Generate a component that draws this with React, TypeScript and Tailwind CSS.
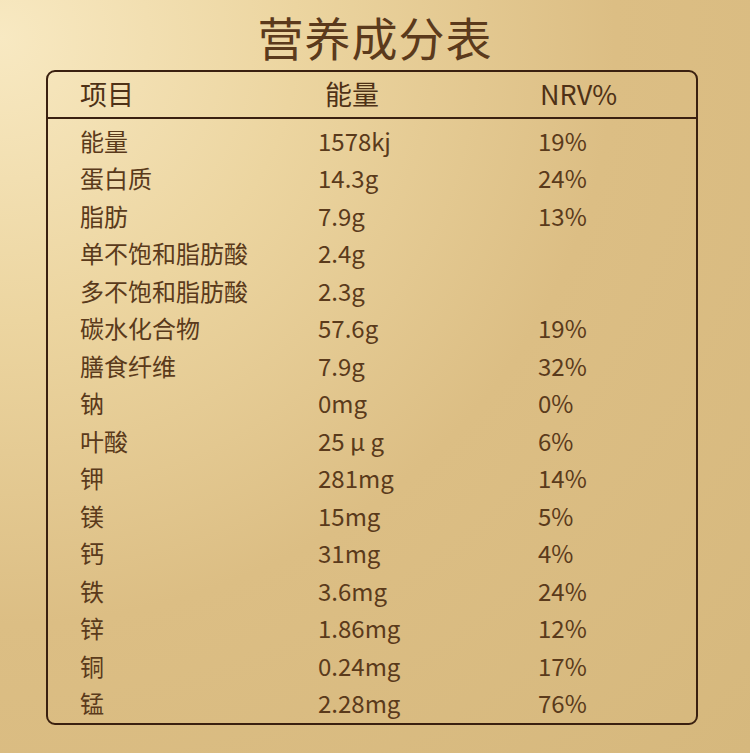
const rows: [string, string, string][] = [
  ['能量', '1578kj', '19%'],
  ['蛋白质', '14.3g', '24%'],
  ['脂肪', '7.9g', '13%'],
  ['单不饱和脂肪酸', '2.4g', ''],
  ['多不饱和脂肪酸', '2.3g', ''],
  ['碳水化合物', '57.6g', '19%'],
  ['膳食纤维', '7.9g', '32%'],
  ['钠', '0mg', '0%'],
  ['叶酸', '25 μ g', '6%'],
  ['钾', '281mg', '14%'],
  ['镁', '15mg', '5%'],
  ['钙', '31mg', '4%'],
  ['铁', '3.6mg', '24%'],
  ['锌', '1.86mg', '12%'],
  ['铜', '0.24mg', '17%'],
  ['锰', '2.28mg', '76%'],
];

export default function App() {
  return (
    <div
      className="w-[750px] h-[753px] overflow-hidden bg-[radial-gradient(ellipse_at_0%_5%,#f8e9c2_0%,#ecd5a0_28%,#dcbe84_58%,#d6b87d_100%)] text-[#5a3a1b]"
      style={{ fontFamily: '"Noto Sans CJK SC", "Noto Sans", sans-serif' }}
    >
      <h1 className="pt-[6px] h-[70px] text-center text-[46px] leading-[60px] font-normal tracking-[1px] text-[#5b3a1c]">
        营养成分表
      </h1>
      <div className="mx-[46px] w-[652px] h-[655px] rounded-[9px] border-2 border-[#3a2010]">
        <div className="flex items-center h-[47px] border-b-2 border-[#3a2010] text-[27px] text-[#4e3116]">
          <div className="w-[277px] pl-[32px]">项目</div>
          <div className="w-[215px]">能量</div>
          <div>NRV%</div>
        </div>
        <div className="pt-[3px]">
          {rows.map(([name, val, nrv]) => (
            <div key={name} className="flex items-center h-[37.5px] text-[24px] leading-none">
              <div className="w-[270px] pl-[32px]">{name}</div>
              <div className="w-[220px]">{val}</div>
              <div>{nrv}</div>
            </div>
          ))}
        </div>
      </div>
    </div>
  );
}
